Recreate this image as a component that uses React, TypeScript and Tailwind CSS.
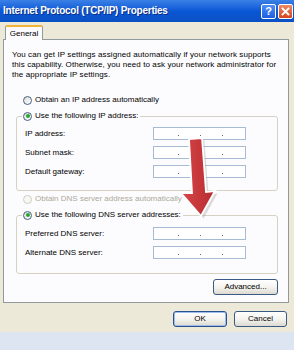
import React from "react";

function Radio({ checked, disabled }: { checked?: boolean; disabled?: boolean }) {
  return (
    <span
      className={
        disabled
          ? "w-[9px] h-[9px] rounded-full border border-[#cfcdc0] bg-[#f7f7f4] flex items-center justify-center shrink-0"
          : "w-[9px] h-[9px] rounded-full border border-[#44608a] bg-[linear-gradient(135deg,#dcdcd5,#ffffff)] flex items-center justify-center shrink-0"
      }
    >
      {checked && <span className="w-[4px] h-[4px] rounded-full bg-[#2aa62a]" />}
    </span>
  );
}

function IpBox() {
  return (
    <div className="w-[93px] h-[13px] border border-[#a7bbd4] bg-white flex items-center pl-[24px] gap-[21px] pt-[3px]">
      <span className="w-[1px] h-[1px] bg-[#6b6b6b]" />
      <span className="w-[1px] h-[1px] bg-[#6b6b6b]" />
      <span className="w-[1px] h-[1px] bg-[#6b6b6b]" />
    </div>
  );
}

function Row({ label }: { label: string }) {
  return (
    <div className="h-[19px] flex items-center">
      <span className="w-[136px] pl-[8px]">{label}</span>
      <IpBox />
    </div>
  );
}

function Btn({ children, def, w }: { children: React.ReactNode; def?: boolean; w: string }) {
  return (
    <div
      className={
        (def
          ? "border border-[#27508f] shadow-[inset_0_0_0_1px_#9fbcec] "
          : "border border-[#3a5a84] ") +
        w +
        " h-[16px] rounded-[3px] bg-linear-to-b from-[#ffffff] via-[#f5f4ef] to-[#dcdad0] flex items-center justify-center text-[8px] text-black"
      }
    >
      {children}
    </div>
  );
}

export default function App() {
  return (
    <div className="relative w-[294px] h-[350px] bg-[#dde4f2] font-['Liberation_Sans',Arial,sans-serif] text-[8px] leading-[10px] text-black overflow-hidden">
      <div className="w-[294px] h-[332px] flex flex-col bg-[#ece9d8]">
        {/* Title bar */}
        <div className="h-[22px] bg-linear-to-b from-[#3a80e6] via-[#0a57d5] to-[#0a50c4] flex items-center pl-[3px] pr-[1px]">
          <span className="flex-1 text-white font-bold text-[10px] tracking-[-0.25px] [text-shadow:1px_1px_0_#0a2f86]">
            Internet Protocol (TCP/IP) Properties
          </span>
          <div className="flex gap-[2px]">
            <div className="w-[15px] h-[15px] rounded-[2px] border border-white bg-linear-to-b from-[#4f8ef7] to-[#1d5ee0] flex items-center justify-center text-white font-bold text-[11px] leading-none">
              ?
            </div>
            <div className="w-[15px] h-[15px] rounded-[2px] border border-white bg-linear-to-b from-[#eb8a63] to-[#d3441b] flex items-center justify-center">
              <svg width="9" height="9" viewBox="0 0 9 9">
                <path d="M1.5 1.5 L7.5 7.5 M7.5 1.5 L1.5 7.5" stroke="white" strokeWidth="1.8" strokeLinecap="square" />
              </svg>
            </div>
          </div>
        </div>

        {/* Tabs */}
        <div className="h-[17px] pl-[5px] pt-[3px] flex items-end">
          <div className="w-[38px] h-[15px] bg-[#fcfcfe] border-x border-[#919b9c] border-t-2 border-t-[#f3b33b] rounded-t-[2px] flex items-center justify-center -mb-[1px] relative z-10">
            General
          </div>
        </div>

        {/* Panel */}
        <div className="ml-[3px] w-[286px] h-[264px] border border-[#919b9c] bg-[#fcfcfe] pl-[8px] pr-[9px] pt-[10px] flex flex-col">
          <p className="leading-[10px] tracking-[0.1px] whitespace-nowrap">
            You can get IP settings assigned automatically if your network supports
            <br />
            this capability. Otherwise, you need to ask your network administrator for
            <br />
            the appropriate IP settings.
          </p>

          <div className="mt-[13px] h-[14px] flex items-center gap-[3px] pl-[11px]">
            <Radio />
            <span>Obtain an IP address automatically</span>
          </div>

          <fieldset className="mt-[2px] ml-[4px] mr-[1px] border border-[#d5d2c3] rounded-[3px] pb-[9px]">
            <legend className="ml-[5px] px-[1px] h-[14px] flex items-center gap-[3px]">
              <Radio checked />
              <span className="pr-[1px]">Use the following IP address:</span>
            </legend>
            <div className="pt-[1px]">
              <Row label="IP address:" />
              <Row label="Subnet mask:" />
              <Row label="Default gateway:" />
            </div>
          </fieldset>

          <div className="mt-[1px] h-[14px] flex items-center gap-[3px] pl-[11px] text-[#aca899]">
            <Radio disabled />
            <span>Obtain DNS server address automatically</span>
          </div>

          <fieldset className="mt-[2px] ml-[4px] mr-[1px] border border-[#d5d2c3] rounded-[3px] pb-[11px]">
            <legend className="ml-[5px] px-[1px] h-[14px] flex items-center gap-[3px]">
              <Radio checked />
              <span className="pr-[1px]">Use the following DNS server addresses:</span>
            </legend>
            <div className="pt-[2px]">
              <Row label="Preferred DNS server:" />
              <Row label="Alternate DNS server:" />
            </div>
          </fieldset>

          <div className="mt-[5px] flex justify-end pr-[1px]">
            <Btn w="w-[65px]">Advanced...</Btn>
          </div>
        </div>

        {/* Bottom buttons */}
        <div className="flex justify-end gap-[7px] pr-[7px] mt-[8px]">
          <Btn def w="w-[54px]">OK</Btn>
          <Btn w="w-[53px]">Cancel</Btn>
        </div>
      </div>

      {/* Red arrow annotation */}
      <svg className="absolute left-[174px] top-[133px]" width="46" height="88" viewBox="174 133 46 88">
        <polygon
          points="190,140 203,139 207,193 216,192 202,217 182,194 193,194"
          fill="#9a9a9a"
          opacity="0.35"
          transform="translate(1.5,1.5)"
        />
        <defs>
          <linearGradient id="ar" x1="0" y1="0" x2="1" y2="0">
            <stop offset="0" stopColor="#d9474a" />
            <stop offset="1" stopColor="#b52a2e" />
          </linearGradient>
        </defs>
        <polygon
          points="189,139 202,138 206,192 215,191 201,216 181,193 192,193"
          fill="url(#ar)"
          stroke="#ffffff"
          strokeWidth="1.8"
          strokeLinejoin="miter"
        />
      </svg>
    </div>
  );
}
